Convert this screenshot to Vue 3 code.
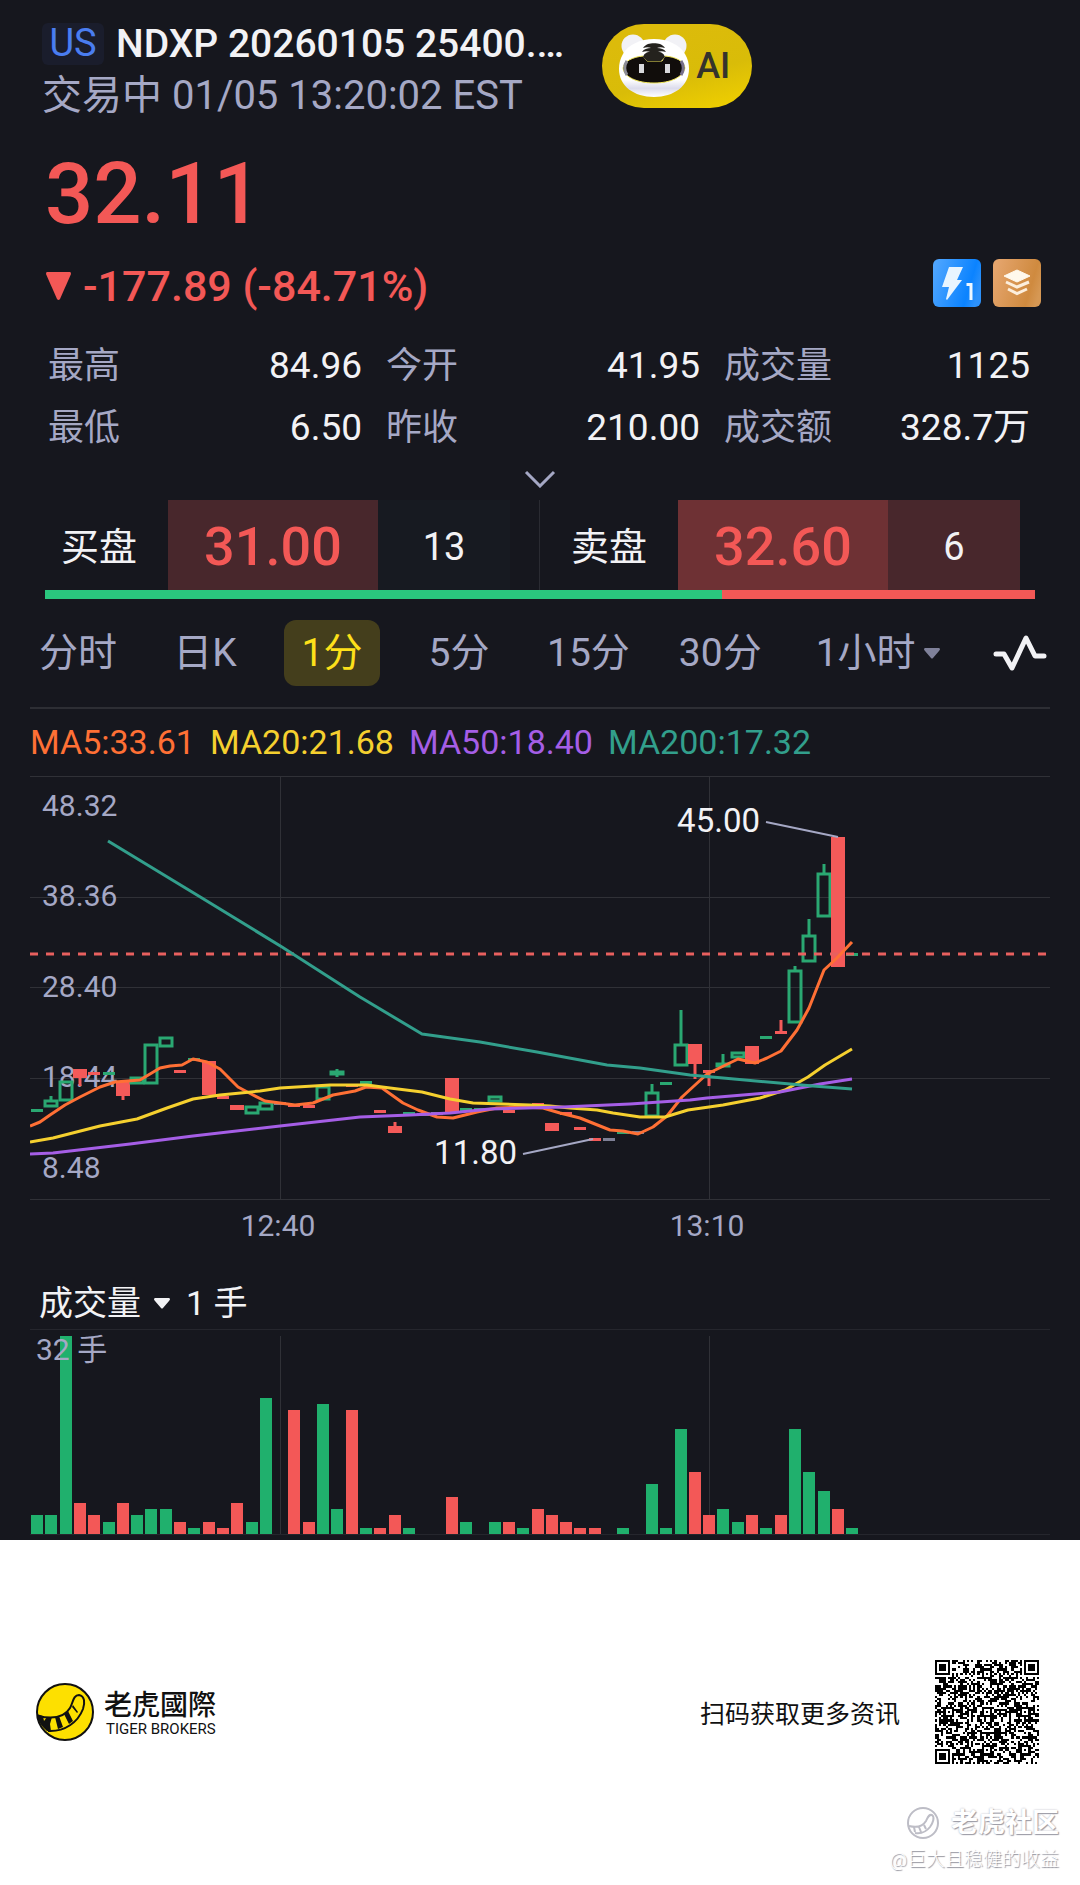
<template>
  <div class="quote-page">
    <main class="quote">
      <header class="header">
        <div class="symbol">
          <div class="symbol-row">
            <span class="market">US</span>
            <h1 class="name">NDXP 20260105 25400.…</h1>
          </div>
          <p class="status">交易中 01/05 13:20:02 EST</p>
        </div>
        <button class="ai-button" type="button">
          <svg class="ai-head" viewBox="0 0 70 64" aria-hidden="true">
            <defs>
              <linearGradient id="face" x1="0" y1="0" x2="0" y2="1">
                <stop offset="0.7" stop-color="#fff" />
                <stop offset="0.85" stop-color="#dcdcec" />
                <stop offset="1" stop-color="#fff" />
              </linearGradient>
            </defs>
            <circle cx="14" cy="12" r="11.5" fill="#f2f2f6" />
            <circle cx="56" cy="12" r="11.5" fill="#f2f2f6" />
            <path d="M35 5c14 0 26 6 31 15 3 5 4 10 4 15 0 17-15 28-35 28S0 52 0 35c0-5 1-10 4-15C9 11 21 5 35 5z" fill="url(#face)" />
            <path d="M24 22C14 23 5 27 4 34c1 9 14 15 31 15s29-6 31-15c-1-7-9-11-20-12l-3 5H28z" fill="#110d0b" stroke="#f3e95c" stroke-width="1" />
            <path d="M8 27c-3 4-3 10 0 14" stroke="#8d8d95" stroke-width="3" fill="none" />
            <path d="M62 27c3 4 3 10 0 14" stroke="#77708a" stroke-width="3" fill="none" />
            <path d="M29 10c3-1 9-1 12 0 2 1 4 2 5 4-3-1-6-1-8 0 4 0 7 1 9 4-3-1-6-1-8 0 4 0 6 2 7 5l-4 4H28l-4-4c1-3 3-5 7-5-2-1-5-1-8 0 2-3 5-4 9-4-2-1-5-1-8 0 1-2 3-3 5-4z" fill="#24221d" />
            <path d="M20 30h5v9h-5zM46 30h5v9h-5z" fill="#d9d9dc" />
          </svg>
          <span>AI</span>
        </button>
      </header>

      <div class="price">32.11</div>

      <div class="change-row">
        <div class="change">
          <svg class="down" viewBox="0 0 25 28" aria-hidden="true"><path d="M1 0h23q1 0 1 2L14 27q-1.500 2-3 0L0 2Q0 0 1 0z" /></svg>
          <span>-177.89 (-84.71%)</span>
        </div>
        <div class="badges">
          <svg class="badge" viewBox="0 0 48 48" role="img" aria-label="Level 1">
            <defs>
              <linearGradient id="blue" x1="0" y1="0.2" x2="1" y2="0.5">
                <stop offset="0" stop-color="#50a6ff" />
                <stop offset="0.8" stop-color="#0b83ff" />
                <stop offset="1" stop-color="#2c91fa" />
              </linearGradient>
            </defs>
            <rect width="48" height="48" rx="6" fill="url(#blue)" />
            <path d="M16 8h14l-6 13h5L14 41l-1-1 3-12H9z" fill="#e9f5ff" />
            <path d="M33.500 25.500h4.500V41" fill="none" stroke="#eef7ff" stroke-width="3" />
          </svg>
          <svg class="badge" viewBox="0 0 48 48" role="img" aria-label="深度行情">
            <defs>
              <linearGradient id="gold" x1="0" y1="0.3" x2="1" y2="0.6">
                <stop offset="0" stop-color="#e5a56d" />
                <stop offset="0.8" stop-color="#cf8a3f" />
                <stop offset="1" stop-color="#d69854" />
              </linearGradient>
            </defs>
            <rect width="48" height="48" rx="6" fill="url(#gold)" />
            <path d="M24 11l13 6-13 6-13-6z" fill="#fff8ec" stroke="#fff8ec" stroke-linejoin="round" />
            <path d="M13 23l11 5 12-5M15 30l9 4.500 10-4.500" fill="none" stroke="#fceedc" stroke-width="3" />
          </svg>
        </div>
      </div>

      <dl class="stats">
        <div v-for="item in stats" :key="item.label" class="stat">
          <dt>{{ item.label }}</dt>
          <dd>{{ item.value }}</dd>
        </div>
      </dl>

      <button class="expand" type="button" aria-label="展开">
        <svg viewBox="0 0 32 18"><path d="M2 2l14 14L30 2" /></svg>
      </button>

      <section class="depth">
        <div class="side bid">
          <span class="side-label">买盘</span>
          <span class="side-price">31.00</span>
          <span class="side-qty">13</span>
        </div>
        <div class="side ask">
          <span class="side-label">卖盘</span>
          <span class="side-price">32.60</span>
          <span class="side-qty">6</span>
        </div>
      </section>
      <div class="ratio"><div class="ratio-bid" :style="{ width: bidRatio + '%' }"></div></div>

      <nav class="tabs">
        <button
          v-for="tab in tabs"
          :key="tab"
          type="button"
          class="tab"
          :class="{ active: tab === activeTab }"
          @click="activeTab = tab"
        >{{ tab }}</button>
        <label class="hour">
          <select v-model="hour" aria-label="小时周期">
            <option>1小时</option>
            <option>2小时</option>
            <option>4小时</option>
          </select>
          <svg class="caret" viewBox="0 0 16 11" aria-hidden="true"><path d="M1 0h14q2 1 0 3L9 10q-1 1-2 0L1 3Q-1 1 1 0z" /></svg>
        </label>
        <button class="indicator" type="button" aria-label="指标">
          <svg viewBox="0 0 54 36"><path d="M3 19h8l8 14L33 3l9 18h9" /></svg>
        </button>
      </nav>

      <div class="ma-legend">
        <span v-for="ma in averages" :key="ma.name" :style="{ color: ma.color }">{{ ma.name }}:{{ ma.value }}</span>
      </div>

      <svg class="chart" viewBox="0 0 1020 476">
        <path class="grid" d="M0 .5H1020M0 121.500H1020M0 211.500H1020M0 302.500H1020M0 423.500H1020M250.500 0V423M679.500 0V423" />
        <g class="axis">
          <text v-for="y in yLabels" :key="y.text" x="12" :y="y.y">{{ y.text }}</text>
          <text x="248" y="460" text-anchor="middle">12:40</text>
          <text x="677" y="460" text-anchor="middle">13:10</text>
        </g>
        <g v-for="c in candles" :key="c.x">
          <path v-if="c.wick" :d="c.wick" :stroke="c.color" stroke-width="3" />
          <rect v-if="c.flat" :x="c.x - 6" :y="c.top - 1" width="12" height="3" :fill="c.color" />
          <rect v-else-if="c.hollow" :x="c.x - 6" :y="c.top + 1" width="12" :height="c.bottom - c.top - 2" fill="none" :stroke="c.color" stroke-width="3" />
          <rect v-else :x="c.x - 7" :y="c.top" width="14" :height="c.bottom - c.top" :fill="c.color" />
        </g>
        <path class="last-price" d="M0 178H1020" />
        <polyline v-for="ma in averages" :key="ma.name" class="ma-line" :points="ma.points" :stroke="ma.color" />
        <path class="pointer" d="M736 46L808 61M493 378L563 363" />
        <g class="extreme">
          <text x="730" y="56" text-anchor="end">45.00</text>
          <text x="487" y="388" text-anchor="end">11.80</text>
        </g>
      </svg>

      <div class="volume-title">
        <label class="volume-pick">
          <select v-model="indicator" aria-label="副图指标">
            <option>成交量</option>
            <option>成交额</option>
          </select>
          <svg class="caret" viewBox="0 0 16 11" aria-hidden="true"><path d="M1 0h14q2 1 0 3L9 10q-1 1-2 0L1 3Q-1 1 1 0z" /></svg>
        </label>
        <span>1 手</span>
      </div>

      <svg class="volume" viewBox="0 0 1020 212">
        <path class="grid faint" d="M0 1.500H1020M0 206.500H1020" />
        <path class="grid" d="M250.500 8V206M679.500 8V206" />
        <rect v-for="bar in volumeBars" :key="bar.x" :x="bar.x" :y="206 - bar.height" width="12" :height="bar.height" :fill="bar.color" />
        <text class="volume-max" x="6" y="32">32 手</text>
      </svg>
    </main>

    <footer class="footer">
      <div class="brand-row">
        <div class="brand">
          <svg class="logo" viewBox="0 0 58 58" aria-hidden="true">
            <circle cx="29" cy="29" r="28" fill="#fde000" stroke="#111" stroke-width="2" />
            <path d="M2 33C15 36 28 35 34 25c3-5 3-13 9-13 6 1 6 8 4 14C42 39 29 49 12 48" fill="none" stroke="#111" stroke-width="2" />
            <path d="M1 31l6 2 1 5 3-4h5l-2 7 1 7h-4C5 43 2 38 1 31zM19 34l4-1 4 11-5 2zM28 31l4-3 5 10-4 3zM36 24l1-2 5 7-1 1z" fill="#111" />
          </svg>
          <div class="brand-text">
            <strong>老虎國際</strong>
            <span>TIGER BROKERS</span>
          </div>
        </div>
        <div class="scan">
          <span>扫码获取更多资讯</span>
          <svg class="qr" viewBox="0 0 49 49" shape-rendering="crispEdges" role="img" aria-label="二维码"><path :d="qrPath" /></svg>
        </div>
      </div>
      <div class="watermark">
        <div class="community">
          <svg viewBox="0 0 32 32" aria-hidden="true">
            <circle cx="16" cy="16" r="15" />
            <path d="M2 19c8 2 14 0 17-5 2-4 3-7 6-6 3 2 1 8-2 12-4 5-9 7-15 6M7 20l1 5M12 20l2 5M17 18l2 4" />
          </svg>
          <span>老虎社区</span>
        </div>
        <span class="author">@巨大且稳健的收益</span>
      </div>
    </footer>
  </div>
</template>

<script setup>
import { ref } from 'vue'

const stats = [
  { label: '最高', value: '84.96' },
  { label: '今开', value: '41.95' },
  { label: '成交量', value: '1125' },
  { label: '最低', value: '6.50' },
  { label: '昨收', value: '210.00' },
  { label: '成交额', value: '328.7万' }
]

const bidRatio = (13 / 19) * 100

const tabs = ['分时', '日K', '1分', '5分', '15分', '30分']
const activeTab = ref('1分')
const hour = ref('1小时')
const indicator = ref('成交量')

const GREEN = '#2aa872'
const RED = '#f45a59'
const GRAY = '#7e8096'
const STEP = 14.3

const yLabels = [
  { text: '48.32', y: 40 },
  { text: '38.36', y: 130 },
  { text: '28.40', y: 221 },
  { text: '18.44', y: 311 },
  { text: '8.48', y: 402 }
]

const averages = [
  {
    name: 'MA5',
    value: '33.61',
    color: '#ff7035',
    points: '0,350 10,346 20,339 35,329 50,321 70,311 85,306 110,304 130,292 140,290 152,289 163,283 177,286 190,293 208,311 223,319 235,325 265,329 283,327 303,319 325,315 336,311 352,312 373,327 388,334 407,341 423,342 447,336 467,332 493,331 513,332 530,337 550,342 580,354 593,355 608,358 623,351 637,340 652,321 677,298 708,283 725,287 737,282 751,275 767,254 779,232 794,194 807,182 822,166'
  },
  {
    name: 'MA20',
    value: '21.68',
    color: '#f5d02f',
    points: '0,366 23,362 70,350 107,343 137,332 163,323 190,319 230,315 250,312 300,309 337,309 360,312 392,316 420,323 443,327 500,329 520,330 540,332 567,334 583,337 610,341 635,341 658,334 693,329 730,322 755,314 778,301 795,289 822,273'
  },
  {
    name: 'MA50',
    value: '18.40',
    color: '#a55ee6',
    points: '0,378 23,377 100,368 163,360 250,350 330,341 380,339 420,337 460,333 533,331 600,328 660,324 677,322 750,316 790,308 822,303'
  },
  {
    name: 'MA200',
    value: '17.32',
    color: '#329f8c',
    points: '78,65 167,119 252,171 330,221 392,258 450,266 507,276 577,289 610,292 660,299 693,302 783,310 822,313'
  }
]

// 每分钟一根: [颜色, 实体上沿, 实体下沿, 最高, 最低]
const candleData = [
  ['g', 334], ['g', 324, 331, 320], ['g', 305, 325], ['r', 293, 302, 293, 310], ['r', 297],
  ['g', 297], ['r', 305, 320, 305, 324], ['g', 301, 308], ['g', 268, 308], ['g', 261, 271],
  ['r', 295], ['g', 283], ['r', 285, 319], ['r', 321], ['r', 329, 334],
  ['g', 330, 338], ['g', 326, 334], ['n', 327], ['r', 329], ['r', 330],
  ['g', 310, 324], ['g', 295, 299, 293, 301], ['r', 309], ['g', 306], ['r', 335],
  ['r', 350, 357, 346], ['g', 337], ['n', 338], ['n', 337], ['r', 302, 336],
  ['g', 333], ['g', 333], ['g', 320, 326], ['r', 335], ['g', 330],
  ['r', 328], ['r', 347, 355], ['r', 337], ['r', 352], ['r', 363],
  ['n', 363], ['g', 356], ['n', 356], ['g', 316, 341, 308], ['g', 307],
  ['g', 268, 290, 234], ['r', 268, 288, 268, 303], ['r', 295, 295, 295, 310], ['g', 287, 291, 278], ['g', 276, 282],
  ['r', 270, 288], ['g', 261], ['r', 256, 256, 244], ['g', 194, 247, 190], ['g', 159, 186, 143],
  ['g', 97, 141, 88], ['r', 61, 191], ['g', 178]
]

const colors = { g: GREEN, r: RED, n: GRAY }

const candles = candleData.map(([type, top, bottom = top, high = top, low = bottom], i) => {
  const x = Math.round(7 + i * STEP)
  let wick = ''
  if (high < top) wick += `M${x} ${high}V${top}`
  if (low > bottom) wick += `M${x} ${bottom}V${low}`
  return { x, top, bottom, wick, color: colors[type], flat: top === bottom, hollow: type === 'g' }
})

const volumes = [
  3, 3, 32, -5, -3, 2, -5, 3, 4, 4, -2, 1, -2, -1, -5, 2, 22, 0, -20, -2,
  21, 4, -20, 1, -1, -3, 1, 0, 0, -6, 2, 0, 2, -2, 1, -4, -3, -2, -1, -1,
  0, 1, 0, 8, 1, 17, -10, -3, 4, 2, -3, 1, -3, 17, 10, 7, -4, 1
]

const volumeBars = volumes.map((v, i) => ({
  x: Math.round(1 + i * STEP),
  height: Math.round((Math.abs(v) * 198) / 32),
  color: v > 0 ? '#20b06d' : '#f35857'
}))

// 二维码: 定位块 + 校正块 + 数据点
const buildQr = () => {
  const n = 49
  const grid = Array.from({ length: n }, () => Array(n).fill(0))
  let seed = 20260105
  for (let y = 0; y < n; y++) {
    for (let x = 0; x < n; x++) {
      seed = (seed * 48271) % 2147483647
      grid[y][x] = seed / 2147483647 < 0.52 ? 1 : 0
    }
  }
  for (let i = 8; i < n - 8; i++) {
    grid[6][i] = grid[i][6] = i % 2 ? 0 : 1
  }
  const square = (cx, cy, radius, light) => {
    for (let dy = -radius; dy <= radius; dy++) {
      for (let dx = -radius; dx <= radius; dx++) {
        const row = grid[cy + dy]
        if (!row || row[cx + dx] === undefined) continue
        row[cx + dx] = light.includes(Math.max(Math.abs(dx), Math.abs(dy))) ? 0 : 1
      }
    }
  }
  square(3, 3, 4, [2, 4])
  square(n - 4, 3, 4, [2, 4])
  square(3, n - 4, 4, [2, 4])
  const marks = [[24, 6], [6, 24], [24, 24], [42, 24], [24, 42], [42, 42]]
  marks.forEach(([x, y]) => square(x, y, 2, [1]))

  let d = ''
  grid.forEach((row, y) => row.forEach((on, x) => {
    if (on) d += `M${x} ${y}h1v1h-1z`
  }))
  return d
}

const qrPath = buildQr()
</script>

<style>
body {
  margin: 0;
  background: #fff;
}
</style>

<style scoped>
.quote-page {
  font-family: Roboto, 'Noto Sans CJK SC', sans-serif;
  color: #f2f2f5;
}

.quote {
  background: #16171e;
  overflow: hidden;
}

button,
select {
  font: inherit;
  color: inherit;
  background: none;
  border: none;
  padding: 0;
  margin: 0;
  appearance: none;
  cursor: pointer;
}

svg {
  display: block;
}

.header {
  display: flex;
  gap: 38px;
  padding: 20px 42px 0;
}

.symbol-row {
  display: flex;
  align-items: center;
  gap: 12px;
}

.market {
  width: 62px;
  height: 42px;
  line-height: 40px;
  border-radius: 6px;
  background: #1a1d2c;
  color: #4a7df0;
  font-size: 38px;
  text-align: center;
}

.name {
  margin: 0;
  font-size: 39px;
  line-height: 48px;
  font-weight: 500;
  white-space: nowrap;
}

.status {
  margin: 0;
  font-size: 40px;
  line-height: 56px;
  color: #a5a8c5;
  white-space: nowrap;
}

.ai-button {
  display: flex;
  align-items: center;
  gap: 7px;
  width: 150px;
  height: 84px;
  margin-top: 4px;
  padding-left: 17px;
  border-radius: 42px;
  background: linear-gradient(165deg, #dcbb0b 20%, #d9bc08 60%, #efcf00 95%);
  color: #35332c;
  font-size: 36px;
  font-weight: 500;
}

.ai-head {
  width: 70px;
  height: 64px;
}

.price {
  padding: 0 45px;
  margin-top: 20px;
  font-size: 85px;
  line-height: 100px;
  font-weight: 500;
  color: #f35856;
}

.change-row {
  display: flex;
  align-items: flex-start;
  justify-content: space-between;
  margin-top: 14px;
  padding: 0 39px 0 46px;
}

.change {
  display: flex;
  align-items: center;
  gap: 12px;
  font-size: 43px;
  line-height: 56px;
  font-weight: 500;
  color: #f35856;
}

.down {
  width: 25px;
  height: 28px;
  fill: #f35856;
}

.badges {
  display: flex;
  gap: 12px;
  padding-top: 1px;
}

.badge {
  width: 48px;
  height: 48px;
}

.stats {
  display: grid;
  grid-template-columns: repeat(3, 1fr);
  column-gap: 24px;
  margin: 21px 0 0;
  padding: 0 42px 0 48px;
  font-size: 36px;
  line-height: 62px;
}

.stat {
  display: flex;
  justify-content: space-between;
}

.stat:nth-child(3n) {
  padding-right: 8px;
}

.stat dt {
  color: #a5a8c5;
}

.stat dd {
  margin: 0;
  font-size: 37px;
}

.expand {
  display: block;
  margin: 11px auto 0;
}

.expand svg {
  width: 32px;
  height: 18px;
  fill: none;
  stroke: #a5a8c5;
  stroke-width: 3;
}

.depth {
  display: flex;
  height: 90px;
  margin: 12px 45px 0;
  line-height: 94px;
}

.side {
  flex: 1;
  display: flex;
  height: 90px;
  font-size: 38px;
}

.bid {
  padding-right: 30px;
}

.ask {
  padding: 0 15px;
  box-shadow: -1px 0 #2a2b32;
}

.side-label {
  flex: 123;
  text-indent: 16px;
}

.side-price {
  flex: 210;
  font-size: 54px;
  font-weight: 500;
  text-align: center;
  color: #f35856;
  background: #48272c;
}

.side-qty {
  flex: 132;
  text-align: center;
  background: #171a21;
}

.ask .side-price {
  background: #6e3134;
}

.ask .side-qty {
  background: #48272c;
}

.ratio {
  height: 9px;
  margin: 0 45px;
  background: #f35856;
}

.ratio-bid {
  height: 100%;
  background: #2ac67e;
}

.tabs {
  display: flex;
  align-items: center;
  gap: 31px;
  margin: 21px 30px 0;
  padding-bottom: 21px;
  border-bottom: 2px solid #2d2e34;
  font-size: 39px;
  line-height: 66px;
  color: #a5a8c5;
}

.tab {
  min-width: 96px;
  padding: 0 9px;
  border-radius: 12px;
}

.tab.active {
  color: #fde01a;
  background: #443e1c;
}

.hour,
.volume-pick {
  display: flex;
  align-items: center;
}

.hour {
  gap: 8px;
  padding-left: 14px;
}

.caret {
  width: 16px;
  height: 11px;
  fill: #7f819a;
}

.indicator {
  margin: 0 3px 0 auto;
}

.indicator svg {
  width: 54px;
  height: 36px;
  fill: none;
  stroke: #f2f2f5;
  stroke-width: 5;
  stroke-linecap: round;
  stroke-linejoin: round;
}

.ma-legend {
  display: flex;
  gap: 15px;
  padding: 0 30px;
  font-size: 34px;
  line-height: 67px;
}

.chart,
.volume {
  width: calc(100% - 60px);
  margin: 0 30px;
}

.grid {
  fill: none;
  stroke: #303137;
  stroke-width: 1;
}

.grid.faint {
  stroke: #25262d;
}

.axis {
  font-size: 30px;
  fill: #a5a8c5;
}

.last-price {
  stroke: #e8605f;
  stroke-width: 3;
  stroke-dasharray: 8 8;
}

.ma-line {
  fill: none;
  stroke-width: 3;
  stroke-linejoin: round;
}

.pointer {
  stroke: #a5a8c5;
  stroke-width: 2;
}

.extreme {
  font-size: 33px;
  fill: #f2f2f5;
}

.volume-title {
  display: flex;
  align-items: center;
  gap: 16px;
  padding: 26px 39px 0;
  font-size: 34px;
  line-height: 50px;
}

.volume-pick {
  gap: 13px;
}

.volume-pick .caret {
  fill: #f2f2f5;
}

.volume-max {
  font-size: 30px;
  fill: #a5a8c5;
}

.footer {
  padding: 120px 21px 13px 36px;
  background: #fff;
  color: #111;
}

.brand-row,
.brand,
.scan,
.community {
  display: flex;
  align-items: center;
}

.brand-row {
  justify-content: space-between;
  padding-right: 20px;
}

.brand {
  gap: 10px;
}

.logo {
  width: 58px;
  height: 58px;
}

.brand-text {
  display: flex;
  flex-direction: column;
}

.brand-text strong {
  font-family: 'Noto Sans CJK TC', sans-serif;
  font-size: 28px;
  line-height: 34px;
  font-weight: 500;
}

.brand-text span {
  padding-left: 2px;
  font-size: 15px;
  line-height: 18px;
}

.scan {
  gap: 35px;
  font-size: 25px;
}

.qr {
  width: 104px;
  height: 104px;
}

.watermark {
  display: flex;
  flex-direction: column;
  align-items: flex-end;
  margin-top: 40px;
  color: #fff;
  text-shadow: 1px 1px 1px #9a9aa4, 0 0 2px #b4b4bd;
}

.community {
  gap: 12px;
  font-size: 27px;
  line-height: 38px;
  font-weight: 700;
}

.community svg {
  width: 32px;
  height: 32px;
  fill: none;
  stroke: #bdbdc6;
  stroke-width: 2;
}

.author {
  font-size: 19px;
  line-height: 36px;
  font-weight: 300;
  text-shadow: 1px 1px 1px #90909a;
}
</style>
